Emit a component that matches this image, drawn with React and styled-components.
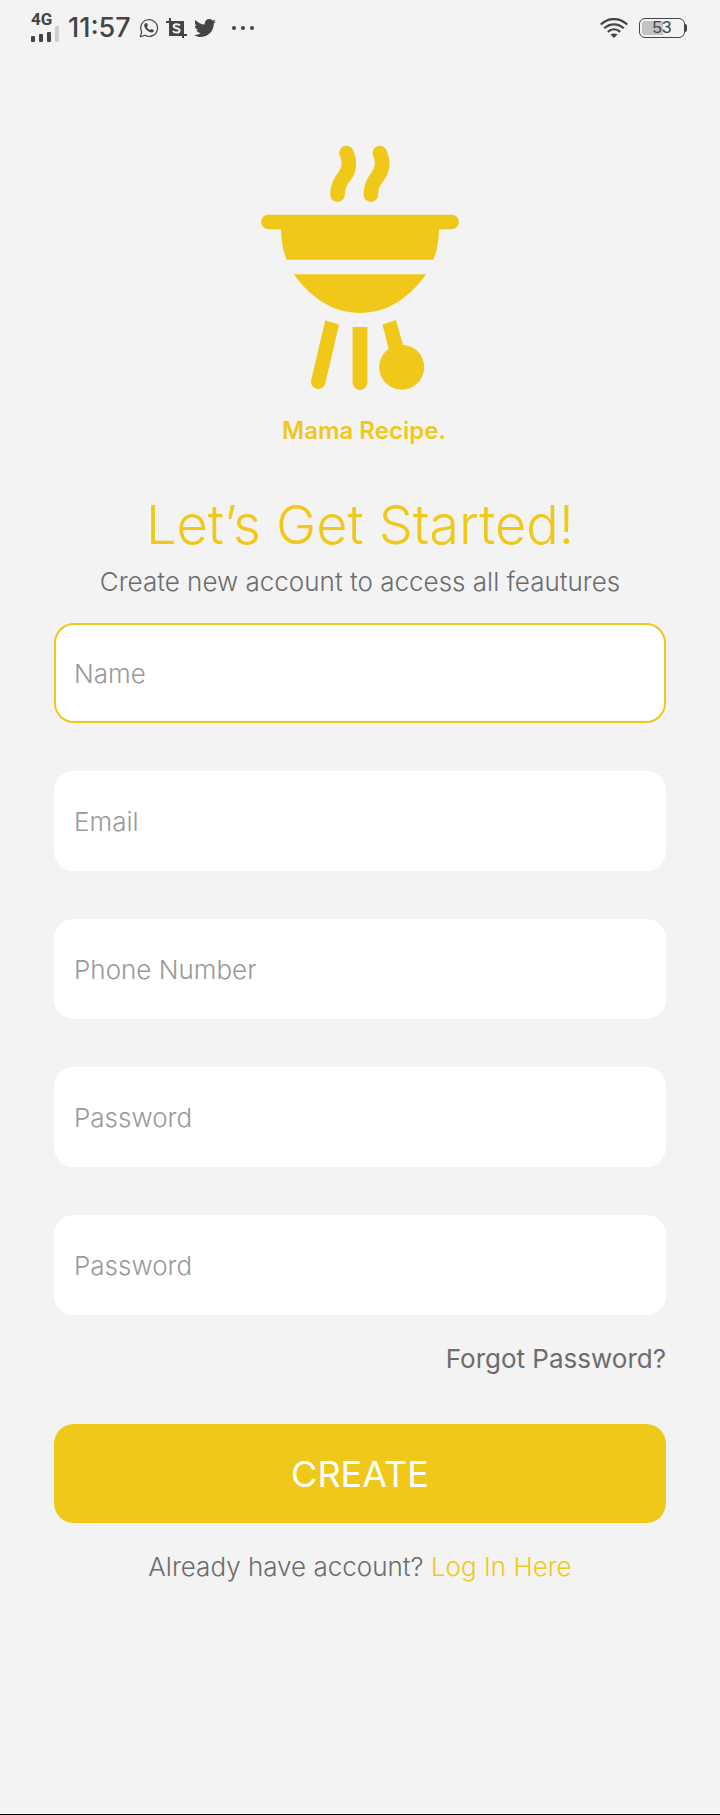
import React from "react";
import styled, { createGlobalStyle } from "styled-components";
import { FaTwitter } from "react-icons/fa";

const yellow = "#efc81a";
const ink = "#444444";
const grey = "#6c6c6c";

const GlobalStyle = createGlobalStyle`
  * { box-sizing: border-box; }
  body {
    margin: 0;
    background: #f3f3f3;
    font-family: Inter, "Liberation Sans", sans-serif;
  }
`;

const Screen = styled.div`
  min-height: 100vh;
  display: flex;
  flex-direction: column;
  border-bottom: 1px solid #000;
`;

const StatusBar = styled.header`
  display: flex;
  justify-content: space-between;
  align-items: center;
  height: 56px;
  padding: 0 33px 0 31px;
  color: ${ink};
`;

const StatusGroup = styled.div`
  display: flex;
  align-items: center;
  gap: ${(p) => p.$gap}px;
`;

const Signal = styled.div`
  display: flex;
  flex-direction: column;
  gap: 1px;
  font-family: Roboto, sans-serif;
  font-size: 17px;
  line-height: 11px;
  font-weight: 700;
`;

const Clock = styled.time`
  font-size: 27px;
  line-height: 32px;
  font-weight: 500;
`;

const StatusIcons = styled.div`
  display: flex;
  align-items: center;
  gap: 7px;
  margin-right: 8px;
`;

const Battery = styled.div`
  display: flex;
  align-items: center;
`;

const BatteryCase = styled.div`
  width: 46px;
  height: 20px;
  border: 1px solid ${ink};
  border-radius: 6px;
  padding: 2px;
`;

const BatteryLevel = styled.div`
  height: 100%;
  border-radius: 3px;
  background: linear-gradient(to right, #c2c2c2 53%, transparent 53%);
  display: flex;
  align-items: center;
  justify-content: center;
  font-family: "Liberation Sans", sans-serif;
  font-size: 17px;
`;

const BatteryTip = styled.div`
  width: 2px;
  height: 8px;
  border-radius: 0 2px 2px 0;
  background: ${ink};
`;

const Main = styled.main`
  display: flex;
  flex-direction: column;
  padding: 89px 54px 0;
`;

const Brand = styled.div`
  display: flex;
  flex-direction: column;
  align-items: center;
  gap: 24px;
  color: ${yellow};
`;

const BrandName = styled.p`
  margin: 0;
  padding-left: 8px;
  font-size: 24px;
  line-height: 32px;
  font-weight: 600;
`;

const Title = styled.h1`
  margin: 46px 0 9px;
  text-align: center;
  color: ${yellow};
  font-size: 54px;
  line-height: 64px;
  font-weight: 300;
`;

const Text = styled.p`
  margin: 0;
  text-align: center;
  color: ${grey};
  font-size: 26px;
  line-height: 32px;
  font-weight: 300;
`;

const Form = styled.form`
  display: flex;
  flex-direction: column;
  margin: 25px 0 28px;
`;

const Fields = styled.div`
  display: flex;
  flex-direction: column;
  gap: 48px;
`;

const Field = styled.input`
  width: 100%;
  height: 100px;
  padding: 0 18px;
  border: 2px solid ${(p) => (p.$active ? yellow : "#fff")};
  border-radius: 20px;
  outline: none;
  background: #fff;
  color: ${grey};
  font-family: inherit;
  font-size: 26px;
  font-weight: 300;
  &::placeholder { color: #999; opacity: 1; }
`;

const Link = styled.a`
  color: ${(p) => (p.$accent ? yellow : grey)};
  text-decoration: none;
`;

const ForgotRow = styled.div`
  display: flex;
  justify-content: flex-end;
  margin: 28px 0 49px;
  font-size: 26px;
  line-height: 32px;
  font-weight: 400;
`;

const Submit = styled.button`
  height: 99px;
  border: 0;
  border-radius: 20px;
  background: ${yellow};
  color: #fff;
  font-family: inherit;
  font-size: 36px;
  font-weight: 400;
`;

const SignalBars = () => (
  <svg width="29" height="17" viewBox="0 0 29 17" aria-hidden="true">
    <rect x="0" y="10" width="4" height="6" rx="1" fill={ink} />
    <rect x="8" y="8" width="4" height="8" rx="1" fill={ink} />
    <rect x="16" y="6" width="4" height="10" rx="1" fill={ink} />
    <rect x="24" y="0" width="4" height="16" rx="1" fill="#cfcfcf" />
  </svg>
);

const WhatsappIcon = () => (
  <svg width="20" height="20" viewBox="0 0 20 20" aria-hidden="true">
    <path
      d="M1.3 18.7L2.700 14A8.400 8.400 0 1 1 5.900 17.300Z"
      fill="none"
      stroke={ink}
      strokeWidth="1.200"
      strokeLinejoin="round"
    />
    <path
      d="M6.300 5.200C7 4.700 7.800 4.900 8.100 5.600L8.800 7.200C9 7.900 8.100 8.500 7.900 8.900C8.600 10.400 9.700 11.500 11.200 12C11.700 11.800 12.200 10.700 12.800 11L14.500 11.900C15.200 12.300 14.700 13.600 14 14.100C12.800 15 10.500 14.300 8.600 12.800C6.700 11.300 5.200 9.100 5.200 7.400C5.200 6.500 5.700 5.700 6.300 5.200Z"
      fill={ink}
    />
  </svg>
);

const CropIcon = () => (
  <svg width="21" height="21" viewBox="0 0 21 21" aria-hidden="true">
    <path d="M0 4H17V20M4 0V17H21" fill="none" stroke={ink} strokeWidth="2" />
    <rect x="4" y="4" width="13" height="13" fill={ink} />
    <path
      d="M14 7.5C13 5.7 7.7 5.5 7.7 8.2C7.7 11 13.6 9.6 13.6 12.5C13.6 15.4 8 15 7 12.8"
      fill="none"
      stroke="#f3f3f3"
      strokeWidth="2"
    />
  </svg>
);

const MoreDots = () => (
  <svg width="22" height="4" viewBox="0 0 22 4" aria-hidden="true">
    <g fill={ink}>
      <circle cx="2" cy="2" r="2" />
      <circle cx="11" cy="2" r="2" />
      <circle cx="20" cy="2" r="2" />
    </g>
  </svg>
);

const WifiIcon = () => (
  <svg width="28" height="20" viewBox="0 0 28 20" aria-hidden="true">
    <g fill="none" stroke={ink} strokeWidth="2.200">
      <path d="M0.7 6.5C8.5 -0.8 19.5 -0.8 27.3 6.5" />
      <path d="M4.2 10.3C10 5 18 5 23.8 10.3" />
      <path d="M7.8 13.9C11.5 10.6 16.5 10.6 20.2 13.9" />
    </g>
    <path d="M10.5 16.6C12.5 15 15.5 15 17.5 16.6L14 20Z" fill={ink} />
  </svg>
);

const GrillLogo = () => (
  <svg width="198" height="246" viewBox="261 145 198 246" fill="currentColor" aria-hidden="true">
    <g fill="none" stroke="currentColor" strokeWidth="14.5" strokeLinecap="round">
      <path d="M346.5 153C350.5 162 349.5 170 344 177C339.5 182.500 337.500 187 337.500 194.700" />
      <path d="M379.800 153C383.800 162 382.800 170 377.300 177C372.800 182.500 370.800 187 370.800 194.700" />
    </g>
    <path d="M268.300 214.700H451.700A7.200 7.200 0 0 1 451.700 229.200H439Q439 246 433.300 259.800H286.700Q281 246 281 229.200H268.300A7.200 7.200 0 0 1 268.300 214.700Z" />
    <path d="M294 274.300H426C408 300 385 313 360 313C335 313 312 300 294 274.300Z" />
    <path d="M325.300 320.300L339 324.800L325 384.500A7.300 7.300 0 0 1 311 381Z" />
    <path d="M352.600 327H367.400V382.500A7.400 7.400 0 0 1 352.600 382.500Z" />
    <path d="M382.500 324.500L396 320L403 345L389 350Z" />
    <circle cx="401.700" cy="367.200" r="22.500" />
  </svg>
);

const fields = [
  { name: "name", label: "Name", type: "text", active: true },
  { name: "email", label: "Email", type: "email" },
  { name: "phone", label: "Phone Number", type: "tel" },
  { name: "password", label: "Password", type: "password" },
  { name: "confirm", label: "Password", type: "password" },
];

export default function App() {
  return (
    <Screen>
      <GlobalStyle />
      <StatusBar>
        <StatusGroup $gap={8}>
          <Signal>
            4G
            <SignalBars />
          </Signal>
          <Clock>11:57</Clock>
          <StatusIcons>
            <WhatsappIcon />
            <CropIcon />
            <FaTwitter size={22} />
          </StatusIcons>
          <MoreDots />
        </StatusGroup>
        <StatusGroup $gap={11}>
          <WifiIcon />
          <Battery>
            <BatteryCase>
              <BatteryLevel>53</BatteryLevel>
            </BatteryCase>
            <BatteryTip />
          </Battery>
        </StatusGroup>
      </StatusBar>
      <Main>
        <Brand>
          <GrillLogo />
          <BrandName>Mama Recipe.</BrandName>
        </Brand>
        <Title>Let’s Get Started!</Title>
        <Text>Create new account to access all feautures</Text>
        <Form onSubmit={(e) => e.preventDefault()}>
          <Fields>
            {fields.map((f) => (
              <Field
                key={f.name}
                name={f.name}
                type={f.type}
                placeholder={f.label}
                aria-label={f.label}
                $active={f.active}
              />
            ))}
          </Fields>
          <ForgotRow>
            <Link href="#forgot">Forgot Password?</Link>
          </ForgotRow>
          <Submit type="submit">CREATE</Submit>
        </Form>
        <Text>
          Already have account? <Link $accent href="#login">Log In Here</Link>
        </Text>
      </Main>
    </Screen>
  );
}
